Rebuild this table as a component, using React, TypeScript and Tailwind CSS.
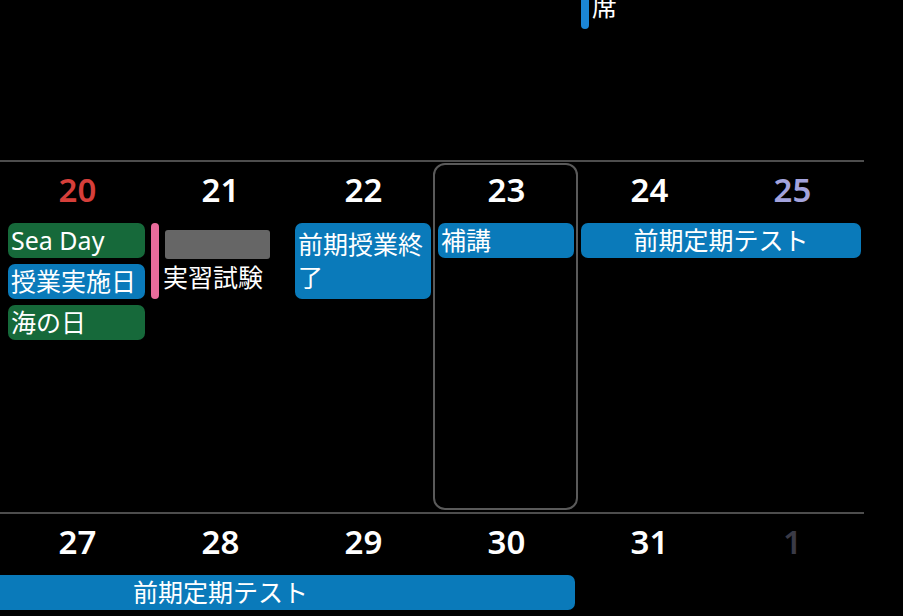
import React from "react";

const FONT = "font-['Noto_Sans','Noto_Sans_CJK_JP',sans-serif]";

function DayNum({ n, color }: { n: string; color: string }) {
  return (
    <div className={`row-start-1 flex justify-center pt-[8px] text-[33px] leading-[40px] font-semibold ${color}`}>
      {n}
    </div>
  );
}

function Box({
  children,
  bg,
  className = "",
}: {
  children: React.ReactNode;
  bg: string;
  className?: string;
}) {
  return (
    <div
      className={`flex items-center rounded-[7px] px-[3px] text-[25px] leading-[33px] text-white ${bg} ${className}`}
    >
      <div className="w-full">{children}</div>
    </div>
  );
}

export default function App() {
  return (
    <div className={`w-[903px] h-[616px] bg-black overflow-hidden ${FONT}`}>
      <div className="ml-[-137px] w-[1001px]">
        {/* previous week (bottom part) */}
        <div className="h-[160px] overflow-hidden grid grid-cols-[repeat(7,143px)]">
          <div className="col-start-6 mt-[-14px] ml-[3px] flex h-[43px] gap-[3px]">
            <div className="w-[8px] rounded-full bg-[#1b86d6]" />
            <div className="pt-[4px] text-[25px] leading-[33px] text-white">席</div>
          </div>
        </div>

        {/* week 20-25 */}
        <div className="h-[352px] border-t-2 border-[#4d4d4d] grid grid-cols-[repeat(7,143px)] grid-rows-[55px_35px_35px_35px_1fr] gap-y-[6px]">
          <div className="col-start-5 row-span-full ml-[-2px] mt-[1px] mb-[2px] rounded-[12px] border-2 border-[#5a5a5a]" />
          <DayNum n="20" color="text-[#d63f3a] col-start-2" />
          <DayNum n="21" color="text-white col-start-3" />
          <DayNum n="22" color="text-white col-start-4" />
          <DayNum n="23" color="text-white col-start-5" />
          <DayNum n="24" color="text-white col-start-6" />
          <DayNum n="25" color="text-[#a3a3dd] col-start-7" />

          <Box bg="bg-[#16693a]" className="col-start-2 row-start-2 ml-[2px] mr-[4px]">
            Sea Day
          </Box>
          <Box bg="bg-[#0a7aba]" className="col-start-2 row-start-3 ml-[2px] mr-[4px]">
            授業実施日
          </Box>
          <Box bg="bg-[#16693a]" className="col-start-2 row-start-4 ml-[2px] mr-[4px]">
            海の日
          </Box>

          <div className="col-start-3 row-start-2 row-span-2 ml-[2px] flex gap-[4px]">
            <div className="w-[8px] rounded-full bg-[#e86b9b]" />
            <div className="flex flex-col justify-center text-[25px] leading-[33px] text-white">
              <div className="h-[33px] flex items-center pl-[2px]">
                <span className="block w-[105px] h-[29px] rounded-[3px] bg-[#666666] blur-[0.6px]" />
              </div>
              <div>実習試験</div>
            </div>
          </div>

          <Box bg="bg-[#0a7aba]" className="col-start-4 row-start-2 row-span-2 ml-[3px] mr-[4px]">
            前期授業終了
          </Box>
          <Box bg="bg-[#0a7aba]" className="col-start-5 row-start-2 ml-[3px] mr-[4px]">
            補講
          </Box>
          <Box bg="bg-[#0a7aba]" className="col-start-6 col-span-2 row-start-2 ml-[3px] mr-[3px] text-center">
            前期定期テスト
          </Box>
        </div>

        {/* week 26-1 */}
        <div className="h-[120px] border-t-2 border-[#4d4d4d] grid grid-cols-[repeat(7,143px)] grid-rows-[55px_35px] gap-y-[6px]">
          <DayNum n="27" color="text-white col-start-2" />
          <DayNum n="28" color="text-white col-start-3" />
          <DayNum n="29" color="text-white col-start-4" />
          <DayNum n="30" color="text-white col-start-5" />
          <DayNum n="31" color="text-white col-start-6" />
          <DayNum n="1" color="text-[#3a3a46] col-start-7" />
          <Box bg="bg-[#0a7aba]" className="col-start-1 col-span-5 row-start-2 ml-[3px] mr-[3px] text-center">
            前期定期テスト
          </Box>
        </div>
      </div>
    </div>
  );
}
